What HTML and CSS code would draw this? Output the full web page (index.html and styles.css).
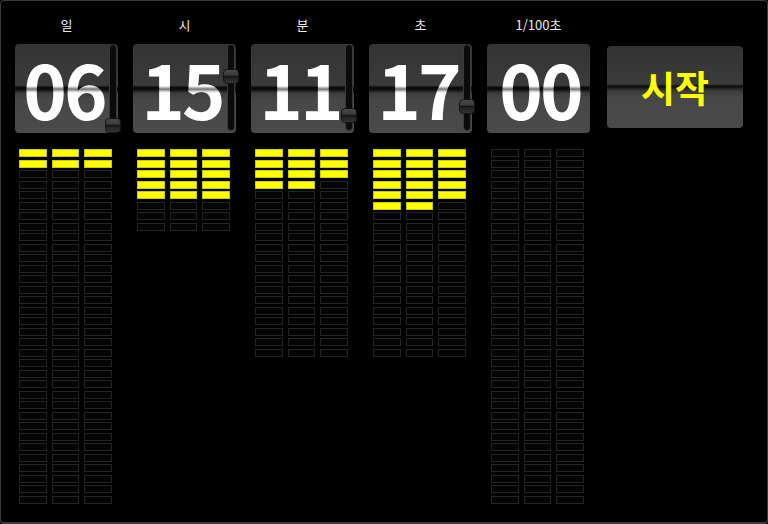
FILE: index.html
```html
<!DOCTYPE html>
<html lang="ko">
<head>
<meta charset="utf-8">
<title>타이머</title>
<link rel="stylesheet" href="styles.css">
</head>
<body>
<div class="frame">
  <div class="row">
    <div class="col">
      <div class="label">일</div>
      <div class="card">
        <span class="num">06</span>
        <div class="track"><div class="thumb" style="top:73px"></div></div>
      </div>
      <div class="leds" data-total="102" data-on="6"></div>
    </div>
    <div class="col">
      <div class="label">시</div>
      <div class="card">
        <span class="num">15</span>
        <div class="track"><div class="thumb" style="top:24px"></div></div>
      </div>
      <div class="leds" data-total="24" data-on="15"></div>
    </div>
    <div class="col">
      <div class="label">분</div>
      <div class="card">
        <span class="num">11</span>
        <div class="track"><div class="thumb" style="top:63px"></div></div>
      </div>
      <div class="leds" data-total="60" data-on="11"></div>
    </div>
    <div class="col">
      <div class="label">초</div>
      <div class="card">
        <span class="num">17</span>
        <div class="track"><div class="thumb" style="top:54px"></div></div>
      </div>
      <div class="leds" data-total="60" data-on="17"></div>
    </div>
    <div class="col">
      <div class="label">1/100초</div>
      <div class="card card-plain">
        <span class="num">00</span>
      </div>
      <div class="leds" data-total="102" data-on="0"></div>
    </div>
    <div class="col col-btn">
      <div class="label"></div>
      <button class="start">시작</button>
    </div>
  </div>
</div>
<script src="script.js"></script>
</body>
</html>
```
FILE: styles.css
```css
html, body {
  margin: 0;
  padding: 0;
  background: #000;
}
.frame {
  width: 768px;
  height: 524px;
  box-sizing: border-box;
  border: 1px solid #3c3c3c;
  border-bottom-width: 2px;
  border-radius: 4px;
  background: #000;
  overflow: hidden;
  font-family: "Noto Sans CJK KR", "Noto Sans", sans-serif;
}
.row {
  display: flex;
  gap: 15px;
  padding-left: 14px;
}
.col {
  width: 103px;
  display: flex;
  flex-direction: column;
}
.label {
  height: 43px;
  box-sizing: border-box;
  padding-top: 15px;
  line-height: 18px;
  font-size: 13px;
  color: #eaeaea;
  text-align: center;
}
.card {
  position: relative;
  height: 89px;
  border-radius: 4px;
  background: linear-gradient(to bottom,
    #333 0%, #3b3b3b 46%, #2a2a2a 47.5%, #0a0a0a 49%, #1c1c1c 51%, #3c3c3c 55%, #474747 62%, #4a4a4a 100%);
  display: flex;
  align-items: center;
  justify-content: center;
  padding-right: 8px;
  box-sizing: border-box;
}
.card-plain {
  padding-right: 0;
}
.num {
  position: relative;
  font-family: "Noto Sans CJK KR", "Noto Sans", sans-serif;
  font-weight: 700;
  font-size: 74px;
  line-height: 80px;
  letter-spacing: -3px;
  color: #fff;
  margin-top: -2px;
  margin-right: -3px;
}
.card::after {
  content: "";
  position: absolute;
  left: 0;
  right: 0;
  top: 42px;
  height: 7px;
  background: linear-gradient(to bottom, rgba(0,0,0,0) 0%, rgba(0,0,0,0.55) 45%, rgba(0,0,0,0.2) 75%, rgba(0,0,0,0) 100%);
  pointer-events: none;
}
.track {
  position: absolute;
  left: 94px;
  top: 0;
  width: 8px;
  height: 87px;
  box-sizing: border-box;
  border: 1px solid #3a3a3a;
  border-radius: 4px;
  background: #0b0b0b;
  z-index: 2;
}
.thumb {
  position: absolute;
  left: -5px;
  width: 16px;
  height: 15px;
  box-sizing: border-box;
  border: 1px solid #151515;
  border-radius: 4px;
  background: linear-gradient(to bottom, #4a4a4a 0%, #3a3a3a 40%, #141414 50%, #222 60%, #333 100%);
}
.leds {
  display: grid;
  grid-template-columns: repeat(3, 27.5px);
  column-gap: 5px;
  row-gap: 2.5px;
  margin-top: 16px;
  margin-left: 4px;
}
.leds i {
  display: block;
  height: 8px;
  box-sizing: border-box;
  border: 1px solid #242424;
  background: #040404;
}
.leds i.on {
  background: #ffff00;
  border-color: #caca00;
}
.col-btn {
  width: 136px;
  margin-left: 2px;
}
.start {
  margin-top: 2px;
  height: 82px;
  border: none;
  border-radius: 4px;
  padding: 0;
  background: linear-gradient(to bottom,
    #333 0%, #3b3b3b 46%, #2a2a2a 47.5%, #0a0a0a 49%, #1c1c1c 51%, #3c3c3c 55%, #474747 62%, #4a4a4a 100%);
  font-family: "Noto Sans CJK KR", "Noto Sans", sans-serif;
  font-weight: 700;
  font-size: 37px;
  color: #ffff00;
  line-height: 1;
}
```
FILE: script.js
```js
document.querySelectorAll('.leds').forEach(function (el) {
  var total = parseInt(el.getAttribute('data-total'), 10);
  var on = parseInt(el.getAttribute('data-on'), 10);
  var html = '';
  for (var i = 0; i < total; i++) {
    html += i < on ? '<i class="on"></i>' : '<i></i>';
  }
  el.innerHTML = html;
});
```
